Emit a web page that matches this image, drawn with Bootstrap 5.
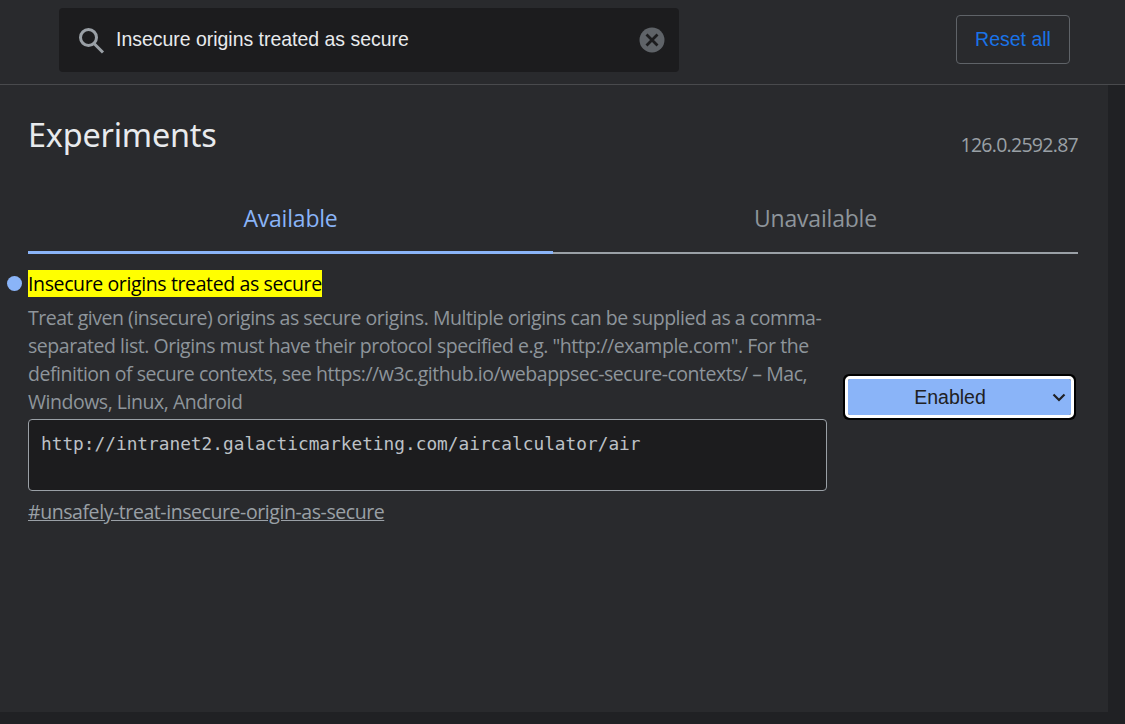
<!DOCTYPE html>
<html lang="en">
<head>
<meta charset="utf-8">
<title>Experiments</title>
<link href="https://cdn.jsdelivr.net/npm/bootstrap@5.3.0/dist/css/bootstrap.min.css" rel="stylesheet">
<style>
html,body{height:100%;overflow:hidden}
body{background:#202124;font-family:"Open Sans","Noto Sans",sans-serif;color:#9aa0a6}
.shell{height:724px}
.topbar{height:85px;background:#292a2d;border-bottom:1px solid #494a4d;padding:8px 55px 0 59px}
.searchbox{width:620px;height:64px;background:#1c1c1e;border-radius:4px;padding:0 14px 0 18px;font-family:"Liberation Sans",Arial,sans-serif;font-size:19.45px;color:#e8eaed}
.searchtext{flex:1;margin-left:11px}
.resetbtn{width:114px;height:49px;margin-top:7px;border:1px solid #5f6368;border-radius:4px;color:#1a73e8;background:transparent;font-family:"Liberation Sans",Arial,sans-serif;font-size:19.5px;padding:0}
.resetbtn:hover{color:#1a73e8;border-color:#5f6368}
.bodyrow{height:627px}
.contentpane{background:#292a2d;flex:1;padding:0 30px 0 28px;min-width:0}
.gutter{width:17px}
.heading-row{height:91px}
.pagetitle{font-size:32.4px;line-height:43px;font-weight:400;color:#e8eaed;margin:28px 0 0;font-family:"Noto Sans","Open Sans",sans-serif;letter-spacing:-.2px}
.versionno{font-size:19.5px;color:#9aa0a6;margin-top:47px;letter-spacing:-.72px;line-height:26px}
.tabstrip{height:78px;border-bottom:2px solid #9aa0a6}
.tabitem{flex:1;text-align:center;font-size:23px;line-height:28px;padding-top:28px;color:#8e959b;margin-bottom:-2px;letter-spacing:-.2px}
.tabitem.on{color:#8ab4f8;border-bottom:3px solid #8ab4f8}
.exprow{position:relative;padding-top:16px}
.dotmark{position:absolute;left:-21px;top:22px;width:15px;height:15px;border-radius:50%;background:#8ab4f8}
.exptext{width:799px;flex:none}
.exptitle{font-size:19.5px;line-height:28px;font-weight:500;letter-spacing:-.38px;color:#e8eaed;margin-bottom:6px}
.exptitle mark{background:#ff0;color:#000;padding:0}
.expdesc{font-size:19.5px;line-height:28px;color:#8e959b;letter-spacing:-.47px;margin:0;white-space:nowrap}
.originbox{display:block;width:799px;height:72px;margin-top:3px;background:#1c1c1e;border:1px solid #9aa0a6;border-radius:4px;color:#bdc1c6;font-family:"DejaVu Sans Mono",monospace;font-size:17.8px;line-height:24px;padding:12px;resize:none;outline:0}
.flaglink{display:inline-block;margin-top:7px;font-size:19.5px;line-height:28px;color:#9aa0a6;letter-spacing:-.43px}
.flaglink:hover{color:#9aa0a6}
.selectwrap{margin-left:17px;padding-top:105px}
.flagselect{width:223px;height:36px;background-color:#8ab4f8;color:#202124;font-family:"Liberation Sans",Arial,sans-serif;font-size:19.5px;text-align:center;border:0;border-radius:2px;padding:2px 19px 0 0;outline:3px solid #fff;outline-offset:0;box-shadow:0 0 0 5px #000;background-image:url("data:image/svg+xml,%3csvg xmlns='http://www.w3.org/2000/svg' viewBox='0 0 14 9'%3e%3cpath fill='none' stroke='%23202124' stroke-width='2.2' d='M1.5 1.5 7 7l5.500-5.500'/%3e%3c/svg%3e");background-position:right 5px center;background-size:14px 9px;margin:4px}
.flagselect:focus{outline:3px solid #fff;box-shadow:0 0 0 5px #000}
</style>
</head>
<body>
<div class="shell d-flex flex-column">
  <header class="topbar d-flex justify-content-between align-items-start">
    <div class="searchbox d-flex align-items-center">
      <svg width="28" height="28" viewBox="0 0 28 28" fill="none" stroke="#9aa0a6" stroke-width="3" aria-hidden="true"><circle cx="11.5" cy="11.5" r="8"/><path d="M17 17.500l9 9"/></svg>
      <span class="searchtext">Insecure origins treated as secure</span>
      <svg width="26" height="26" viewBox="0 0 26 26" aria-hidden="true"><circle cx="13" cy="13" r="12.500" fill="#5f6368"/><path d="M7.500 7.500l11 11M18.500 7.500l-11 11" stroke="#1c1c1e" stroke-width="2.800"/></svg>
    </div>
    <button type="button" class="btn resetbtn">Reset all</button>
  </header>
  <div class="bodyrow d-flex">
    <main class="contentpane">
      <div class="heading-row d-flex justify-content-between align-items-start">
        <h1 class="pagetitle">Experiments</h1>
        <div class="versionno">126.0.2592.87</div>
      </div>
      <div class="tabstrip d-flex">
        <div class="tabitem on">Available</div>
        <div class="tabitem">Unavailable</div>
      </div>
      <div class="exprow d-flex">
        <span class="dotmark"></span>
        <div class="exptext">
          <div class="exptitle"><mark>Insecure origins treated as secure</mark></div>
          <p class="expdesc">Treat given (insecure) origins as secure origins. Multiple origins can be supplied as a comma-<br>separated list. Origins must have their protocol specified e.g. "http://example.com". For the<br>definition of secure contexts, see https://w3c.github.io/webappsec-secure-contexts/ – Mac,<br>Windows, Linux, Android</p>
          <textarea class="originbox" spellcheck="false">http://intranet2.galacticmarketing.com/aircalculator/air</textarea>
          <a href="#" class="flaglink">#unsafely-treat-insecure-origin-as-secure</a>
        </div>
        <div class="selectwrap">
          <select class="form-select flagselect" aria-label="Flag state"><option>Enabled</option><option>Disabled</option><option>Default</option></select>
        </div>
      </div>
    </main>
    <div class="gutter"></div>
  </div>
</div>
<script src="https://cdn.jsdelivr.net/npm/bootstrap@5.3.0/dist/js/bootstrap.bundle.min.js"></script>
</body>
</html>
